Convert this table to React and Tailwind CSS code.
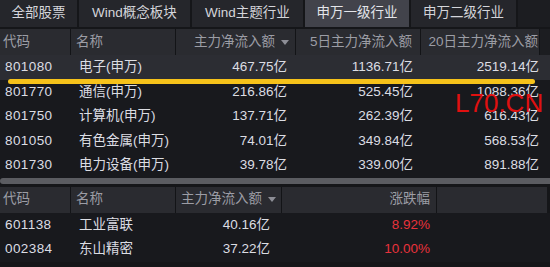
const tabs = ["全部股票", "Wind概念板块", "Wind主题行业", "申万一级行业", "申万二级行业"];
const tabWidths = ["w-[77px]", "w-[111px]", "w-[111px]", "w-[104px]", "w-[105px]"];

const industries = [
  ["801080", "电子(申万)", "467.75亿", "1136.71亿", "2519.14亿"],
  ["801770", "通信(申万)", "216.86亿", "525.45亿", "1088.36亿"],
  ["801750", "计算机(申万)", "137.71亿", "262.39亿", "616.43亿"],
  ["801050", "有色金属(申万)", "74.01亿", "349.84亿", "568.53亿"],
  ["801730", "电力设备(申万)", "39.78亿", "339.00亿", "891.88亿"],
];

const stocks = [
  ["601138", "工业富联", "40.16亿", "8.92%"],
  ["002384", "东山精密", "37.22亿", "10.00%"],
];

function Arrow() {
  return (
    <svg width="8" height="5" viewBox="0 0 8 5" className="ml-[6px] inline-block">
      <path d="M0 0 H8 L4 5 Z" fill="#8d8e96" />
    </svg>
  );
}

export default function App() {
  return (
    <div
      className="relative w-[550px] h-[267px] overflow-hidden bg-[#151619] text-[13.5px] text-[#dcdde3]"
      style={{ fontFamily: '"Liberation Sans", "Noto Sans CJK SC", sans-serif' }}
    >
      {/* tabs */}
      <div className="flex h-[27px] gap-[2px]">
        {tabs.map((t, i) => (
          <div
            key={t}
            className={`${tabWidths[i]} flex items-center justify-center ${
              i === 3 ? "bg-[#42434b] text-[#e4e5ea]" : "bg-[#25262b] text-[#d4d5da]"
            }`}
          >
            {t}
          </div>
        ))}
        <div className="flex-1 bg-[#1c1d21]" />
      </div>

      {/* industry table */}
      <div className="mt-[2px]">
        <div className="flex h-[26px] bg-[#2a2b30] text-[#9c9da5]">
          <div className="w-[71px] flex items-center pl-[3px] border-r border-[#131417]">代码</div>
          <div className="w-[105px] flex items-center pl-[5px] border-r border-[#131417]">名称</div>
          <div className="w-[120px] flex items-center justify-end pr-[6px] border-r border-[#131417]">
            主力净流入额
            <Arrow />
          </div>
          <div className="w-[125px] flex items-center justify-end pr-[8px] border-r border-[#131417]">5日主力净流入额</div>
          <div className="w-[119px] flex items-center justify-end pr-[1px] border-r border-[#131417] whitespace-nowrap">20日主力净流入额</div>
          <div className="flex-1 bg-[#1c1d21]" />
        </div>
        {industries.map((r, i) => (
          <div
            key={r[0]}
            className={`flex h-[24.5px] items-center ${i === 0 ? "bg-[#2c2d33]" : "bg-[#18191d]"}`}
          >
            <div className="w-[71px] pl-[5px] tracking-[0.4px]">{r[0]}</div>
            <div className="w-[105px] pl-[8px]">{r[1]}</div>
            <div className="w-[120px] text-right pr-[9px]">{r[2]}</div>
            <div className="w-[125px] text-right pr-[8px]">{r[3]}</div>
            <div className="w-[119px] text-right pr-[1px]">{r[4]}</div>
          </div>
        ))}
      </div>

      {/* scrollbar */}
      <div className="h-[6px] rounded-l-[3px] bg-[#5b5c61]" />

      {/* stock table */}
      <div className="mt-[3px]">
        <div className="flex h-[26px] bg-[#2a2b30] text-[#9c9da5] mr-[3px]">
          <div className="w-[71px] flex items-center pl-[3px] border-r border-[#131417]">代码</div>
          <div className="w-[105px] flex items-center pl-[5px] border-r border-[#131417]">名称</div>
          <div className="w-[106px] flex items-center pl-[5px] border-r border-[#131417]">
            主力净流入额
            <Arrow />
          </div>
          <div className="w-[155px] flex items-center justify-end pr-[6px] border-r border-[#131417]">涨跌幅</div>
          <div className="flex-1" />
        </div>
        {stocks.map((r) => (
          <div key={r[0]} className="flex h-[24.5px] items-center bg-[#18191d]">
            <div className="w-[71px] pl-[5px] tracking-[0.4px]">{r[0]}</div>
            <div className="w-[105px] pl-[8px]">{r[1]}</div>
            <div className="w-[106px] text-right pr-[12px]">{r[2]}</div>
            <div className="w-[155px] text-right pr-[7px] text-[#e8323c]">{r[3]}</div>
          </div>
        ))}
      </div>

      {/* highlight line */}
      <div className="absolute left-[8px] top-[79px] w-[527px] h-[5px] rounded-full bg-[#f6c21a]" />

      {/* watermark */}
      <div
        className="absolute left-[455px] top-[90px] text-[26px] leading-none text-[#e01010]"
        style={{ fontWeight: 300 }}
      >
        L70.CN
      </div>
    </div>
  );
}
